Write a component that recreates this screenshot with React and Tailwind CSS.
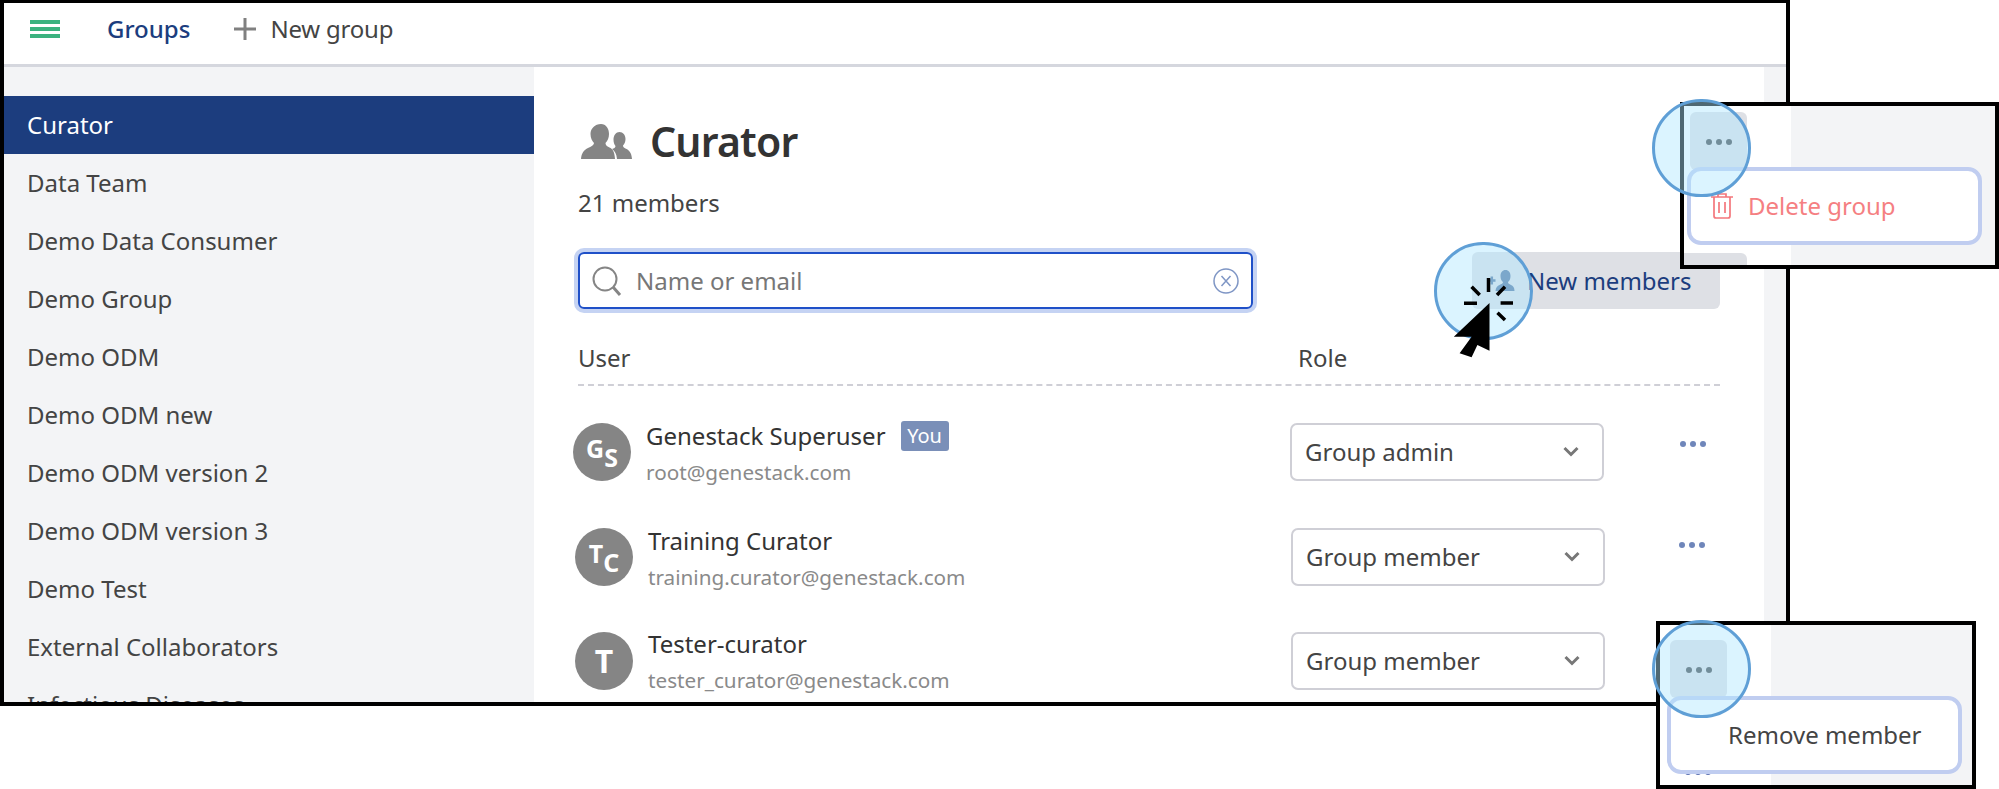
import React from "react";

const groups = ["Curator","Data Team","Demo Data Consumer","Demo Group","Demo ODM","Demo ODM new","Demo ODM version 2","Demo ODM version 3","Demo Test","External Collaborators","Infectious Diseases"];

function Dots({ color, gap = "gap-[4px]" }) {
  return (
    <div className={`flex ${gap}`}>
      <span className={`w-[6px] h-[6px] rounded-full ${color}`} />
      <span className={`w-[6px] h-[6px] rounded-full ${color}`} />
      <span className={`w-[6px] h-[6px] rounded-full ${color}`} />
    </div>
  );
}

function Chevron() {
  return (
    <svg width="16" height="11" viewBox="0 0 16 11" className="shrink-0">
      <path d="M1.5 2 L8 8.5 L14.5 2" fill="none" stroke="#777" strokeWidth="3" />
    </svg>
  );
}

function Select({ label }) {
  return (
    <div className="w-[314px] h-[58px] shrink-0 flex items-center justify-between pl-[13px] pr-[23px] pb-[1px] border-2 border-[#cfcfd6] rounded-[7px] text-[#444]">
      <span>{label}</span>
      <Chevron />
    </div>
  );
}

function Avatar({ a, b }) {
  return (
    <div className="w-[58px] h-[58px] shrink-0 rounded-full bg-[#858585] flex items-center justify-center text-white font-bold">
      {b ? (
        <>
          <span className="text-[25px] leading-none -translate-y-[4px]">{a}</span>
          <span className="text-[25px] leading-none translate-y-[5px]">{b}</span>
        </>
      ) : (
        <span className="text-[32px] leading-none">{a}</span>
      )}
    </div>
  );
}

function Row({ className, avatarClass, textClass, a, b, name, you, email, role, dotsClass, dotsColor }) {
  return (
    <div className={`flex items-start h-[58px] ${className}`}>
      <div className={avatarClass}><Avatar a={a} b={b} /></div>
      <div className={textClass}>
        <div className="flex items-center h-[28px] -mt-px text-[#333] whitespace-nowrap">
          {name}
          {you && <span className="ml-[15px] w-[48px] h-[30px] flex items-center justify-center rounded-[3px] bg-[#7a8fb8] text-white text-[20px]">You</span>}
        </div>
        <div className="mt-[9px] h-[26px] leading-[26px] text-[20.7px] text-[#8a8a8a] whitespace-nowrap">{email}</div>
      </div>
      <Select label={role} />
      <div className={dotsClass}><Dots color={dotsColor} /></div>
    </div>
  );
}

function Circle({ className }) {
  return <div className={`absolute w-[99px] h-[98px] rounded-full border-[3px] border-[#5f9fd6] bg-[rgba(176,230,255,0.45)] ${className}`} />;
}

export default function App() {
  return (
    <div className="relative w-[1999px] h-[789px] overflow-hidden bg-white text-[24px] [font-family:'Noto_Sans',sans-serif]">
      {/* main framed window */}
      <div className="w-[1790px] h-[706px] border-4 border-t-[3px] border-black overflow-hidden flex flex-col">
        <header className="h-[64px] shrink-0 flex items-center pb-[9px] border-b-[3px] border-[#d5d7de] bg-white">
          <div className="ml-[26px] w-[30px] flex flex-col gap-[3px]">
            <span className="h-[4px] bg-[#3bb27f]" />
            <span className="h-[4px] bg-[#3bb27f]" />
            <span className="h-[4px] bg-[#3bb27f]" />
          </div>
          <span className="ml-[47px] font-medium text-[#1c3d7e]">Groups</span>
          <svg width="22" height="22" viewBox="0 0 22 22" className="ml-[44px]">
            <path d="M11 0V22M0 11H22" stroke="#808080" strokeWidth="3" />
          </svg>
          <span className="ml-[14px] tracking-[-0.2px] text-[#444]">New group</span>
        </header>
        <div className="flex flex-1 min-h-0">
          <aside className="w-[530px] shrink-0 bg-[#f3f4f6] pt-[29px]">
            {groups.map((g, i) => (
              <div key={g} className={`h-[58px] flex items-center pl-[23px] pb-[1px] ${i === 0 ? "bg-[#1c3d7e] text-white" : "text-[#444]"}`}>{g}</div>
            ))}
          </aside>
          <main className="flex-1 pl-[44px] pr-[44px] pt-[49px] bg-white">
            <div className="flex items-center h-[50px]">
              <svg width="51" height="35" viewBox="0 0 51 35" className="ml-[3px]">
                <path fill="#858585" d="M20 0c5 0 8 4.500 8 10 0 4-1.500 7-3.500 9 0 2 1 3 4 4.500 3 1.500 5 3.500 5.500 11.500H0c.5-6 3-9 7-11 4-1.800 6-3 6-5-2-2-3.500-5-3.500-9C9.500 4.500 14 0 20 0z" />
                <path fill="#858585" d="M38.500 8c3.500 0 6 3 6 7 0 3-1 5-2.500 6.500 0 1.500.8 2.300 3 3.300 3 1.400 5.500 3.700 6 10.200H36c-.5-5-2-8-5-10 2-.5 3.500-1.500 3.500-3-1.300-1.500-2-3.700-2-6.500 0-4 2.500-7.500 6-7.500z" />
              </svg>
              <h1 className="ml-[18px] text-[41px] leading-[50px] tracking-[-0.8px] font-semibold text-[#333]">Curator</h1>
            </div>
            <div className="mt-[22px] h-[30px] leading-[30px] text-[#444]">21 members</div>
            <div className="mt-[34px] flex justify-between">
              <div className="w-[675px] h-[57px] flex items-center pl-[12px] pr-[12px] rounded-[6px] border-2 border-[#1f50c8] shadow-[0_0_0_4px_#c5d3f3]">
                <svg width="30" height="30" viewBox="0 0 30 30" className="shrink-0">
                  <circle cx="13" cy="13" r="11.500" fill="none" stroke="#858585" strokeWidth="2" />
                  <path d="M21 21L28 29" stroke="#858585" strokeWidth="3" />
                </svg>
                <span className="ml-[14px] flex-1 text-[#777]">Name or email</span>
                <svg width="26" height="26" viewBox="0 0 26 26" className="shrink-0">
                  <circle cx="13" cy="13" r="12" fill="none" stroke="#7f96c5" strokeWidth="1.500" />
                  <path d="M8.500 8L17.500 18M17.500 8L8.500 18" stroke="#7f96c5" strokeWidth="1.500" />
                </svg>
              </div>
              <div className="w-[248px] h-[57px] flex items-center rounded-[6px] bg-[#dee0e5]">
                <svg width="30" height="26" viewBox="0 0 30 26" className="ml-[15px]">
                  <path d="M1 12.500H8.500M4.800 8.500V16.500" stroke="#5074a0" strokeWidth="2.500" />
                  <path fill="#5074a0" d="M18.500 2c3 0 5 2.500 5 6 0 3-1 5-2.500 6 0 1.500 1 2 3 3 2 .8 3.500 2.500 3.500 6H8.500c.2-3.500 2-5 4-6 2-1 3.500-1.500 3.500-3-1.500-1-2.500-3-2.500-6 0-3.500 2-6 5-6z" />
                </svg>
                <span className="ml-[10px] text-[#1c3d7e]">New members</span>
              </div>
            </div>
            <div className="mt-[34px] h-[43px] border-b-2 border-dashed border-[#cfcfd6] text-[#444] flex items-start leading-[30px]">
              <span className="w-[720px]">User</span>
              <span>Role</span>
            </div>
            <Row className="mt-[37px]" avatarClass="-ml-[5px]" textClass="ml-[15px] w-[644px]" a="G" b="S" name="Genestack Superuser" you email="root@genestack.com" role="Group admin" dotsClass="ml-[76px] mt-[18px]" dotsColor="bg-[#6f86ba]" />
            <Row className="mt-[47px]" avatarClass="-ml-[3px]" textClass="ml-[15px] w-[643px]" a="T" b="C" name="Training Curator" email="training.curator@genestack.com" role="Group member" dotsClass="ml-[74px] mt-[14px]" dotsColor="bg-[#6f86ba]" />
            <Row className="mt-[46px]" avatarClass="-ml-[3px]" textClass="ml-[15px] w-[643px] -translate-y-px" a="T" name="Tester-curator" email="tester_curator@genestack.com" role="Group member" dotsClass="ml-[74px] mt-[14px]" dotsColor="bg-[#6f86ba]" />
          </main>
          <div className="w-[22px] shrink-0 bg-[#f3f4f6]" />
        </div>
      </div>

      {/* click highlight on New members */}
      <Circle className="left-[1434px] top-[242px]" />
      <svg width="70" height="90" viewBox="0 0 70 90" className="absolute left-[1450px] top-[272px]">
        <path fill="#000" d="M39.500 31 L3.800 64.700 L21.600 64.700 L9.600 81.300 L21.600 85.300 L27.400 73 L39.500 78.700 Z" />
        <path stroke="#000" strokeWidth="3.500" fill="none" d="M38.500 6V20M21.600 14.700L29.700 23M55 14.700L47 23M14 31.300H27M50.600 31H63M47.500 40.700L55 48" />
      </svg>

      {/* overlay: group menu */}
      <div className="absolute left-[1680px] top-[102px] w-[319px] h-[167px] border-4 border-black flex overflow-hidden">
        <div className="w-[107px] bg-white" />
        <div className="flex-1 bg-[#f3f4f6]" />
        <div className="absolute left-[6px] top-[6px] w-[57px] h-[58px] rounded-[6px] bg-[#dee0e5] flex justify-center pt-[27px]">
          <Dots color="bg-[#3f4448]" />
        </div>
        <div className="absolute left-0 top-[147px] w-[63px] h-[20px] rounded-tr-[6px] bg-[#dee0e5]" />
        <div className="absolute left-[3px] top-[61px] w-[295px] h-[78px] rounded-[14px] border-4 border-[#c0cdf0] bg-white flex items-center pl-[20px] text-[#f57f82]">
          <svg width="22" height="26" viewBox="0 0 22 26" className="shrink-0">
            <path d="M0 4H22M7 4V1H15V4M3 4V23C3 24.500 4 25 5 25H17C18 25 19 24.500 19 23V4M8 9V20M14 9V20" fill="none" stroke="#f4777c" strokeWidth="1.700" />
          </svg>
          <span className="ml-[15px]">Delete group</span>
        </div>
      </div>
      <Circle className="left-[1652px] top-[99px]" />

      {/* overlay: member menu */}
      <div className="absolute left-[1656px] top-[621px] w-[320px] h-[168px] border-4 border-black flex overflow-hidden">
        <div className="w-[111px] bg-white" />
        <div className="flex-1 bg-[#f3f4f6]" />
        <div className="absolute left-[10px] top-[15px] w-[57px] h-[58px] rounded-[6px] bg-[#dee0e5] flex justify-center pt-[27px]">
          <Dots color="bg-[#3f4448]" />
        </div>
        <div className="absolute left-[25px] top-[144px]"><Dots color="bg-[#5a6fb0]" /></div>
        <div className="absolute left-[7px] top-[71px] w-[295px] h-[78px] rounded-[14px] border-4 border-[#c0cdf0] bg-white flex items-center pl-[57px] text-[#444]">
          Remove member
        </div>
      </div>
      <Circle className="left-[1652px] top-[620px]" />
    </div>
  );
}
